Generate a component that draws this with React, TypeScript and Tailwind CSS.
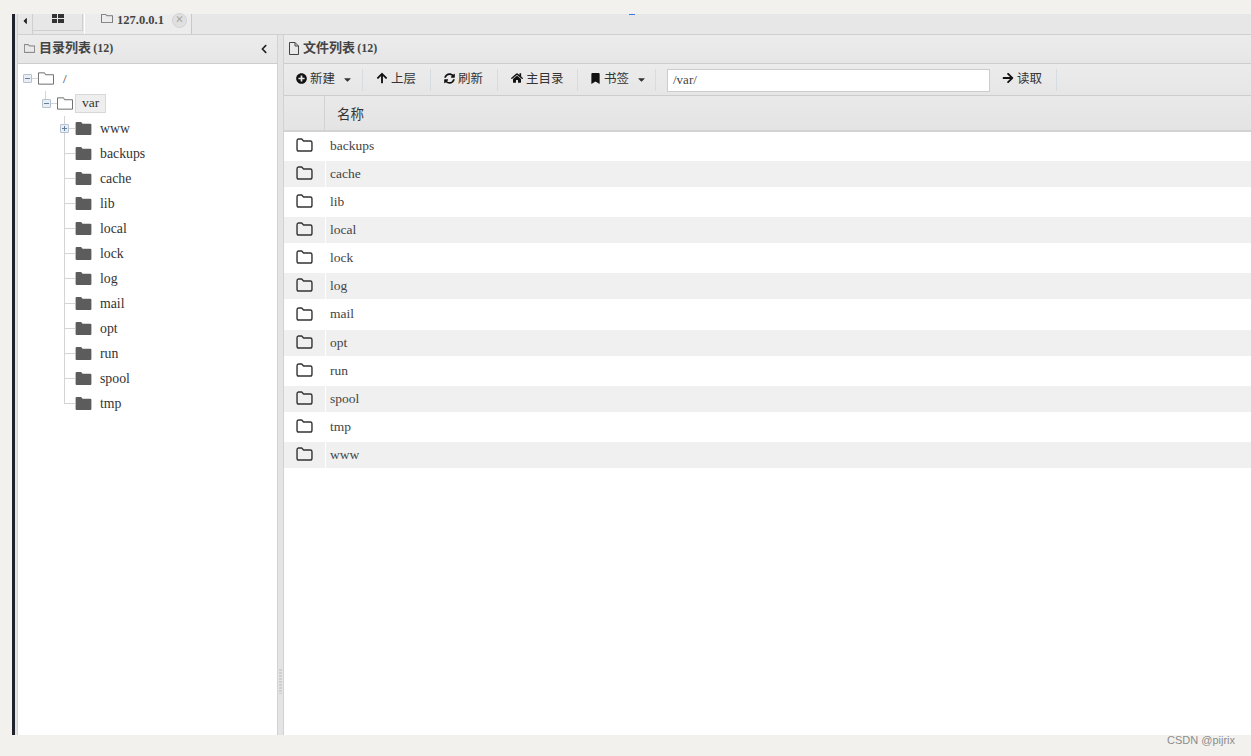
import React from 'react';
import { FaPlusCircle, FaArrowUp, FaSyncAlt, FaHome, FaBookmark, FaArrowRight, FaCaretDown, FaCaretLeft, FaChevronLeft } from 'react-icons/fa';

const serif = "font-['Liberation_Serif','Noto_Sans_CJK_SC',serif]";

const treeDirs = ['www', 'backups', 'cache', 'lib', 'local', 'lock', 'log', 'mail', 'opt', 'run', 'spool', 'tmp'];
const fileDirs = ['backups', 'cache', 'lib', 'local', 'lock', 'log', 'mail', 'opt', 'run', 'spool', 'tmp', 'www'];

const OutlineFolder = ({ className }: { className?: string }) => (
  <svg viewBox="0 0 17 13" className={className} fill="none" stroke="currentColor" strokeWidth="1">
    <path d="M0.5 12.5V0.5H7L8 2.5H16.5V12.5Z" />
  </svg>
);

const SolidFolder = () => (
  <svg viewBox="0 0 17 14" className="w-[17px] h-[13px] text-[#5c5c5c] shrink-0" fill="currentColor">
    <path d="M0 1C0 0.4 0.4 0 1 0H6L7.5 2H16C16.6 2 17 2.4 17 3V13C17 13.6 16.6 14 16 14H1C0.4 14 0 13.6 0 13Z" />
  </svg>
);

const RoundFolder = () => (
  <svg viewBox="0 0 18 15" className="w-[17px] h-[14px] text-[#333]" fill="none" stroke="currentColor" strokeWidth="1.5">
    <path d="M1 3C1 1.9 1.6 1 2.6 1H6L8 3.2H15.2C16.3 3.2 17 4 17 5V12C17 13.2 16.3 14 15.2 14H2.8C1.7 14 1 13.2 1 12Z" strokeLinejoin="round" />
  </svg>
);

const FileOutline = () => (
  <svg viewBox="0 0 10 13" className="w-[10px] h-[13px] text-[#444]" fill="none" stroke="currentColor" strokeWidth="1">
    <path d="M0.5 0.5H6L9.5 4V12.5H0.5Z M6 0.5V4H9.5" />
  </svg>
);

const Toggle = ({ open }: { open: boolean }) => (
  <span className="relative block w-[9px] h-[9px] border border-[#b4c2d0] bg-[#e8eef3] rounded-[1px]">
    <span className="absolute left-[1px] top-[3px] w-[5px] h-px bg-[#5f7f9c]" />
    {!open && <span className="absolute left-[3px] top-[1px] w-px h-[5px] bg-[#5f7f9c]" />}
  </span>
);

const ToolButton = ({ icon, label, caret, cls }: { icon: React.ReactNode; label: string; caret?: boolean; cls: string }) => (
  <div className={`flex items-center h-[22px] border-r border-[#d5dde3] text-[12.5px] text-[#333] shrink-0 ${cls}`}>
    <span className="text-[#111] mr-[3px] mb-[3px] flex items-center">{icon}</span>
    <span className="font-['Noto_Sans_CJK_SC',sans-serif] leading-none mb-[3px]">{label}</span>
    {caret && <FaCaretDown className="ml-[7px] text-[11px] text-[#333]" />}
  </div>
);

const TreeRow = ({ name, last, first }: { name: string; last: boolean; first: boolean }) => (
  <div className="relative flex items-center h-[25px] pl-[57px]">
    <span className={`absolute left-[46px] top-0 w-px bg-[#d4d4d4] ${last ? 'h-[13px]' : 'h-[25px]'}`} />
    <span className="absolute left-[46px] top-[12px] w-[11px] h-px bg-[#d4d4d4]" />
    {first && (
      <span className="absolute left-[42px] top-[8px]">
        <Toggle open={false} />
      </span>
    )}
    <SolidFolder />
    <span className="ml-[8px] mt-[1px] text-[13.8px] text-[#333]">{name}</span>
  </div>
);

export default function App() {
  return (
    <div className={`relative w-[1251px] h-[756px] overflow-hidden bg-[#f2f1ed] pt-[14px] pb-[21px] pl-[12px] flex ${serif}`}>
      <div className="w-[3px] bg-[#20222c] shrink-0" />
      <div className="w-[3px] bg-[#e4e4e4] border-r border-[#d2d2d2] shrink-0" />
      <div className="flex-1 min-w-0 flex flex-col">
        {/* tab strip */}
        <div className="h-[21px] shrink-0 flex bg-[#e7e7e7] border-b border-[#d0d0d0] relative">
          <div className="w-[15px] flex items-start justify-center border-r border-[#cfcfcf] pt-[2px]">
            <FaCaretLeft className="text-[10px] text-[#222]" />
          </div>
          <div className="w-[50px] h-[17px] border-r border-b border-[#d0d0d0] flex justify-center">
            <span className="grid grid-cols-2 gap-px w-[12px] h-[9px]">
              <span className="bg-[#333]" /><span className="bg-[#333]" /><span className="bg-[#333]" /><span className="bg-[#333]" />
            </span>
          </div>
          <div className="ml-[1px] w-[108px] h-[20px] bg-[#ececec] border-r border-[#c8c8c8] border-l border-l-white flex items-start pl-[16px]">
            <OutlineFolder className="w-[12px] h-[9px] text-[#444] shrink-0" />
            <span className="ml-[4px] text-[12.5px] leading-[12px] font-bold text-[#444]">127.0.0.1</span>
            <span className="ml-[8px] mt-[-1px] w-[15px] h-[15px] rounded-full bg-[#e0e0e0] border border-[#d2d2d2] text-[#a8a8a8] text-[14px] leading-[12px] text-center font-bold">×</span>
          </div>
        </div>
        <div className="flex-1 min-h-0 flex">
          {/* directory panel */}
          <div className="w-[259px] shrink-0 flex flex-col bg-white">
            <div className="h-[29px] shrink-0 flex items-center bg-linear-to-b from-[#ececec] to-[#e6e6e6] border-b border-[#cdcdcd] pl-[6px] pr-[8px] pb-[2px] text-[13px] font-bold text-[#444]">
              <OutlineFolder className="w-[11px] h-[9px] text-[#444] shrink-0" />
              <span className="ml-[4px]">目录列表 <span className="text-[12px] ml-[-1px]">(12)</span></span>
              <FaChevronLeft className="ml-auto text-[10px] text-[#222] mt-[2px]" />
            </div>
            <div className="pt-[2px] flex-1 flex flex-col">
              <div className="relative flex items-center h-[25px] pl-[20px]">
                <span className="absolute left-[5px] top-[8px]"><Toggle open /></span>
                <span className="absolute left-[14px] top-[12px] w-[6px] h-px bg-[#d4d4d4]" />
                <OutlineFolder className="w-[16px] h-[13px] text-[#666]" />
                <span className="ml-[9px] text-[13px] text-[#333]">/</span>
              </div>
              <div className="relative flex items-center h-[25px] pl-[39px]">
                <span className="absolute left-[27px] top-0 w-px h-[8px] bg-[#d4d4d4]" />
                <span className="absolute left-[24px] top-[8px]"><Toggle open /></span>
                <span className="absolute left-[33px] top-[12px] w-[6px] h-px bg-[#d4d4d4]" />
                <OutlineFolder className="w-[16px] h-[13px] text-[#666]" />
                <span className="ml-[2px] h-[19px] px-[6px] flex items-center bg-[#eeeeee] border border-[#d8d8d8] text-[13.5px] text-[#333]">var</span>
              </div>
              {treeDirs.map((d, i) => (
                <TreeRow key={d} name={d} first={i === 0} last={i === treeDirs.length - 1} />
              ))}
            </div>
          </div>
          {/* splitter */}
          <div className="w-[7px] shrink-0 bg-[#e4e4e4] border-x border-[#d2d2d2] relative">
            <span className="absolute left-[1px] top-[634px] w-[3px] h-[25px] bg-[repeating-linear-gradient(#cfcfcf_0_2px,#e4e4e4_2px_3px)]" />
          </div>
          {/* file panel */}
          <div className="flex-1 min-w-0 flex flex-col bg-white">
            <div className="h-[29px] shrink-0 flex items-center bg-linear-to-b from-[#ececec] to-[#e6e6e6] border-b border-[#cdcdcd] pl-[5px] pb-[2px] text-[13px] font-bold text-[#444]">
              <FileOutline />
              <span className="ml-[4px]">文件列表 <span className="text-[12px] ml-[-1px]">(12)</span></span>
            </div>
            <div className="h-[32px] shrink-0 flex items-center bg-linear-to-b from-[#ececec] to-[#e6e6e6] border-b border-[#cdcdcd]">
              <ToolButton cls="w-[79px] pl-[12px]" icon={<FaPlusCircle className="text-[11px]" />} label="新建" caret />
              <ToolButton cls="w-[68px] pl-[13px]" icon={<FaArrowUp className="text-[12px]" />} label="上层" />
              <ToolButton cls="w-[67px] pl-[13px]" icon={<FaSyncAlt className="text-[11px]" />} label="刷新" />
              <ToolButton cls="w-[80px] pl-[13px]" icon={<FaHome className="text-[12px]" />} label="主目录" />
              <ToolButton cls="w-[78px] pl-[12px]" icon={<FaBookmark className="text-[11px]" />} label="书签" caret />
              <div className="ml-[11px] mt-[1px] w-[323px] h-[23px] shrink-0 bg-white border border-[#cccccc] flex items-center pl-[5px] text-[13px] text-[#444]">/var/</div>
              <div className="ml-[1px] w-[66px]">
                <ToolButton cls="w-[66px] pl-[11px]" icon={<FaArrowRight className="text-[12px]" />} label="读取" />
              </div>
            </div>
            <div className="h-[36px] shrink-0 flex bg-linear-to-b from-[#e9e9e9] to-[#e4e4e4] border-b-2 border-[#d2d2d2]">
              <div className="w-[41px] border-r border-[#d2d2d2]" />
              <div className="pl-[12px] flex items-center text-[13.5px] text-[#333] font-['Noto_Sans_CJK_SC',sans-serif]">名称</div>
            </div>
            <div className="flex flex-col">
              {fileDirs.map((d, i) => (
                <div key={d} className="h-[28.1px] pt-[1px] flex">
                  <div className={`w-[41px] h-[26px] flex items-center pl-[12px] pb-[2px] ${i % 2 === 1 ? 'bg-[#f0f0f0]' : 'bg-white'}`}>
                    <RoundFolder />
                  </div>
                  <div className={`flex-1 h-[26px] ml-px flex items-center pl-[4px] text-[13.5px] text-[#444] ${i % 2 === 1 ? 'bg-[#f0f0f0]' : 'bg-white'}`}>
                    {d}
                  </div>
                </div>
              ))}
            </div>
          </div>
        </div>
      </div>
      <span className="absolute left-[1167px] top-[732px] text-[11px] text-[#8c8c8c] font-['Liberation_Sans',sans-serif]">CSDN @pijrix</span>
      <span className="absolute left-[629px] top-[14px] w-[6px] h-px bg-[#3b78e7]" />
    </div>
  );
}
